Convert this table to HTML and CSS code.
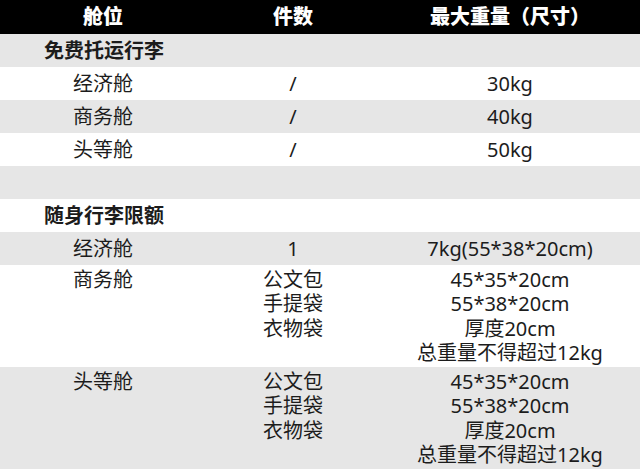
FILE: index.html
```html
<!DOCTYPE html>
<html lang="zh">
<head>
<meta charset="utf-8">
<link rel="stylesheet" href="styles.css">
</head>
<body>
<table class="baggage">
  <colgroup>
    <col class="c1">
    <col class="c2">
    <col class="c3">
  </colgroup>
  <thead>
    <tr class="head">
      <th>舱位</th>
      <th>件数</th>
      <th>最大重量（尺寸）</th>
    </tr>
  </thead>
  <tbody>
    <tr class="gray section"><td colspan="3">免费托运行李</td></tr>
    <tr class="white"><td>经济舱</td><td>/</td><td>30kg</td></tr>
    <tr class="gray"><td>商务舱</td><td>/</td><td>40kg</td></tr>
    <tr class="white"><td>头等舱</td><td>/</td><td>50kg</td></tr>
    <tr class="gray"><td colspan="3"></td></tr>
    <tr class="white section"><td colspan="3">随身行李限额</td></tr>
    <tr class="gray"><td>经济舱</td><td>1</td><td>7kg(55*38*20cm)</td></tr>
    <tr class="white multi">
      <td>商务舱</td>
      <td>公文包<br>手提袋<br>衣物袋</td>
      <td>45*35*20cm<br>55*38*20cm<br>厚度20cm<br>总重量不得超过12kg</td>
    </tr>
    <tr class="gray multi">
      <td>头等舱</td>
      <td>公文包<br>手提袋<br>衣物袋</td>
      <td>45*35*20cm<br>55*38*20cm<br>厚度20cm<br>总重量不得超过12kg</td>
    </tr>
  </tbody>
</table>
</body>
</html>
```

FILE: styles.css
```css
html, body {
  margin: 0;
  padding: 0;
  background: #ffffff;
}

body {
  width: 640px;
  height: 469px;
  overflow: hidden;
  font-family: "Noto Sans", "Noto Sans CJK SC", sans-serif;
  color: #1c1c1c;
}

.baggage {
  width: 640px;
  border-collapse: collapse;
  table-layout: fixed;
}

.c1 { width: 206px; }
.c2 { width: 174px; }
.c3 { width: 260px; }

.baggage th,
.baggage td {
  padding: 0;
  text-align: center;
  font-size: 20px;
  line-height: 24px;
}

.baggage .head th {
  height: 34px;
  background: #000000;
  color: #ffffff;
  font-weight: 900;
  font-size: 20px;
}

.baggage tbody td {
  height: 33px;
  vertical-align: middle;
}

.gray { background: #e6e6e6; }
.white { background: #ffffff; }

.baggage .section td {
  text-align: left;
  padding-left: 44px;
  font-weight: 700;
}

.baggage .multi td {
  height: 102px;
  vertical-align: top;
  padding-top: 3px;
  line-height: 24.3px;
  box-sizing: border-box;
}
```
